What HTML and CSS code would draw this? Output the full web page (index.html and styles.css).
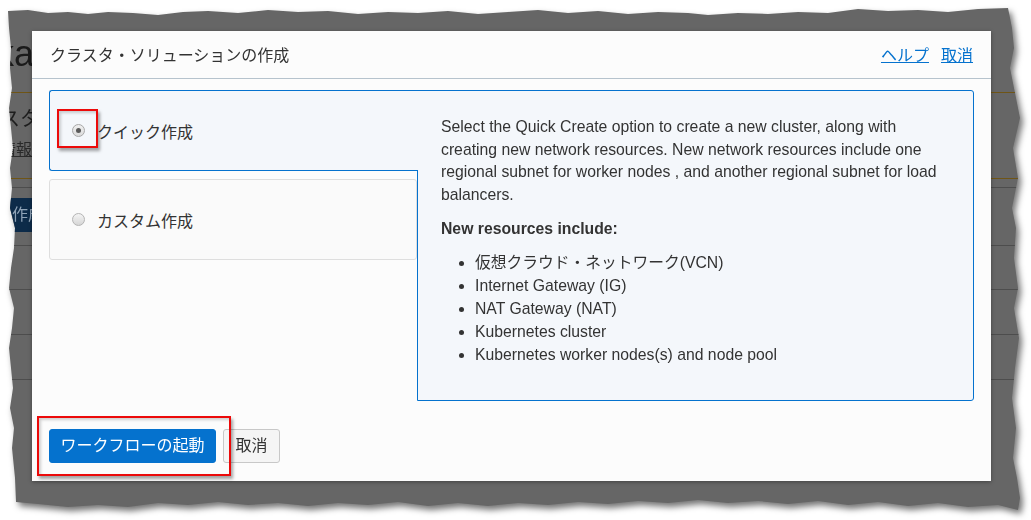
FILE: index.html
```html
<!DOCTYPE html>
<html lang="ja">
<head>
<meta charset="utf-8">
<title>クラスタ・ソリューションの作成</title>
<link rel="stylesheet" href="styles.css">
</head>
<body>
<div class="shot">
  <div class="frame">
    <div class="bgpage">
      <div class="bg-title"><span>ka</span></div>
      <div class="bg-info">
        <div class="bg-sub">スタ</div>
        <div class="bg-link">情報</div>
      </div>
      <div class="bg-toolbar"><span class="bg-btn">作成</span></div>
      <div class="bg-row r1"></div>
      <div class="bg-row"></div>
      <div class="bg-row"></div>
    </div>

    <div class="modal">
      <div class="modal-head">
        <div class="title">クラスタ・ソリューションの作成</div>
        <div class="links"><a href="#">ヘルプ</a><a href="#">取消</a></div>
      </div>
      <div class="modal-body">
        <div class="options">
          <div class="opt active">
            <span class="radio on"></span><span>クイック作成</span>
            <div class="mark mark-radio"></div>
          </div>
          <div class="opt">
            <span class="radio"></span><span>カスタム作成</span>
          </div>
        </div>
        <div class="panel">
          <p>Select the Quick Create option to create a new cluster, along with creating new network resources. New network resources include one regional subnet for worker nodes , and another regional subnet for load balancers.</p>
          <h4>New resources include:</h4>
          <ul>
            <li>仮想クラウド・ネットワーク(VCN)</li>
            <li>Internet Gateway (IG)</li>
            <li>NAT Gateway (NAT)</li>
            <li>Kubernetes cluster</li>
            <li>Kubernetes worker nodes(s) and node pool</li>
          </ul>
        </div>
      </div>
      <div class="modal-foot">
        <button class="btn btn-primary">ワークフローの起動</button>
        <button class="btn btn-default">取消</button>
        <div class="mark mark-foot"></div>
      </div>
    </div>
  </div>
</div>
</body>
</html>
```
FILE: styles.css
```css
html, body {
  margin: 0;
  background: #ffffff;
}
body {
  font-family: "Liberation Sans", "Noto Sans CJK JP", sans-serif;
  color: #333;
}
.shot {
  padding: 8px;
  width: 1014px;
  filter: drop-shadow(3px 4px 3px rgba(0, 0, 0, 0.55));
}
.frame {
  position: relative;
  width: 1014px;
  height: 504px;
  background: #666666;
  overflow: hidden;
  clip-path: polygon(
    0px 3px, 20px 2px, 40px 5px, 60px 4px, 80px 6px, 100px 4px, 125px 5px, 150px 7px, 175px 4px, 200px 3px,
    230px 5px, 260px 2px, 290px 4px, 320px 3px, 350px 6px, 380px 4px, 410px 5px, 440px 3px, 470px 6px, 500px 4px,
    530px 2px, 560px 5px, 590px 3px, 620px 6px, 650px 4px, 680px 5px, 700px 7px, 730px 5px, 760px 6px, 790px 4px,
    820px 5px, 850px 1px, 880px 3px, 910px 2px, 940px 4px, 970px 1px, 1000px 0px,
    1004px 20px, 1006px 40px, 1002px 60px, 1008px 90px, 1012px 110px, 1005px 140px, 1010px 170px, 1004px 200px,
    1008px 220px, 1006px 250px, 1010px 280px, 1006px 300px, 1011px 330px, 1007px 360px, 1004px 390px,
    1008px 420px, 1005px 450px, 1009px 470px, 1012px 490px, 1010px 502px,
    990px 497px, 960px 499px, 930px 495px, 900px 498px, 870px 494px, 840px 497px, 810px 493px, 780px 496px,
    750px 493px, 720px 495px, 690px 492px, 660px 495px, 630px 493px, 600px 496px, 570px 494px, 540px 497px,
    510px 495px, 480px 498px, 450px 495px, 420px 498px, 390px 494px, 360px 497px, 330px 495px, 300px 498px,
    270px 495px, 240px 497px, 210px 494px, 180px 497px, 150px 495px, 120px 499px, 90px 497px, 60px 499px,
    30px 496px, 8px 494px,
    7px 470px, 4px 440px, 6px 420px, 2px 400px, 5px 380px, 3px 360px, 1px 340px, 4px 320px, 6px 300px,
    1px 280px, 3px 260px, 6px 240px, 7px 220px, 2px 200px, 4px 180px, 2px 160px, 5px 140px, 3px 120px,
    1px 100px, 4px 80px, 2px 60px, 3px 40px, 1px 20px
  );
}

/* page behind the dialog (dimmed) */
.bgpage {
  white-space: nowrap;
}
.bg-title {
  height: 56px;
  padding-top: 28px;
  font-size: 36px;
  line-height: 36px;
  color: #1a1a1a;
  text-indent: -12px;
  border-bottom: 1px solid #6f5516;
}
.bg-info {
  height: 85px;
  border-bottom: 1px solid #6f5516;
  text-indent: -8px;
}
.bg-sub {
  padding-top: 16px;
  font-size: 20px;
  line-height: 20px;
  color: #1e1e1e;
}
.bg-link {
  margin-top: 12px;
  font-size: 16px;
  line-height: 18px;
  color: #2a2a2a;
  text-decoration: underline;
}
.bg-toolbar {
  margin-top: 8px;
  height: 57px;
  border-top: 1px solid #4d4d4d;
  border-bottom: 1px solid #4d4d4d;
}
.bg-btn {
  display: inline-block;
  margin-top: 10px;
  margin-left: -10px;
  height: 34px;
  padding: 0 14px;
  line-height: 34px;
  font-size: 16px;
  background: #0d2b49;
  color: #8fa3b7;
}
.bg-row {
  height: 44px;
  border-bottom: 1px solid #4d4d4d;
}
.bg-row.r1 {
  height: 43px;
}

/* dialog */
.modal {
  position: absolute;
  left: 24px;
  top: 23px;
  width: 959px;
  height: 450px;
  background: #fcfcfc;
  box-shadow: 0 1px 4px rgba(0, 0, 0, 0.35);
  display: flex;
  flex-direction: column;
}
.modal-head {
  height: 47px;
  flex: none;
  border-bottom: 1px solid #b6c3cd;
  display: flex;
  align-items: center;
  justify-content: space-between;
  padding: 0 18px;
}
.title {
  font-size: 16px;
  color: #333;
  margin-top: -1px;
}
.links {
  margin-top: -1px;
}
.links a {
  color: #0572ce;
  text-decoration: underline;
  font-size: 16px;
  margin-left: 12px;
}
.modal-body {
  padding: 11px 17px 0;
  display: grid;
  grid-template-columns: 368px 557px;
  align-items: start;
}
.options {
  display: flex;
  flex-direction: column;
  gap: 8px;
}
.opt {
  position: relative;
  height: 79px;
  border: 1px solid #dedede;
  border-radius: 3px;
  background: #fafafa;
  display: flex;
  align-items: center;
  padding-left: 22px;
  font-size: 16px;
  color: #333;
}
.opt.active {
  z-index: 1;
  border-color: #0572ce;
  border-right: none;
  border-radius: 3px 0 0 3px;
  background: #f4f7fb;
  margin-right: -1px;
}
.radio {
  position: relative;
  flex: none;
  width: 13px;
  height: 13px;
  box-sizing: border-box;
  border-radius: 50%;
  border: 1px solid #b4b4b4;
  background: linear-gradient(#f4f4f4, #d6d6d6);
  margin-right: 12px;
}
.radio.on {
  border-color: #a8a8a8;
  background: linear-gradient(#efefef, #dcdcdc);
}
.radio.on::after {
  content: "";
  position: absolute;
  left: 3px;
  top: 3px;
  width: 5px;
  height: 5px;
  border-radius: 50%;
  background: #5a5a5a;
}
.panel {
  box-sizing: border-box;
  height: 311px;
  border: 1px solid #0572ce;
  border-radius: 0 3px 3px 0;
  background: #f4f7fb;
  padding: 25px 23px 0;
  font-size: 15.75px;
  color: #333;
}
.panel p {
  margin: 0;
  line-height: 22.7px;
}
.panel h4 {
  margin: 11px 0 0;
  font-size: 15.75px;
  line-height: 22.7px;
  font-weight: bold;
}
.panel ul {
  margin: 10px 0 0;
  padding-left: 34px;
  line-height: 23px;
}
.modal-foot {
  position: relative;
  margin-top: 28px;
  padding: 0 17px;
  display: flex;
  gap: 7px;
}
.btn {
  height: 34px;
  box-sizing: border-box;
  border-radius: 3px;
  font-family: inherit;
  font-size: 16px;
  line-height: 32px;
  padding: 0;
  cursor: pointer;
}
.btn-primary {
  width: 167px;
  background: #0572ce;
  border: 1px solid #0572ce;
  color: #ffffff;
}
.btn-default {
  width: 57px;
  background: #f5f5f5;
  border: 1px solid #c8c8c8;
  color: #333;
}

/* red annotation boxes */
.mark {
  position: absolute;
  box-sizing: border-box;
  border: 2px solid #ec0a0a;
  box-shadow: 2px 3px 3px rgba(0, 0, 0, 0.35), inset 2px 2px 3px rgba(0, 0, 0, 0.18);
  pointer-events: none;
}
.mark-radio {
  left: 7px;
  top: 18px;
  width: 41px;
  height: 39px;
}
.mark-foot {
  left: 5px;
  top: -13px;
  width: 194px;
  height: 60px;
}
```
